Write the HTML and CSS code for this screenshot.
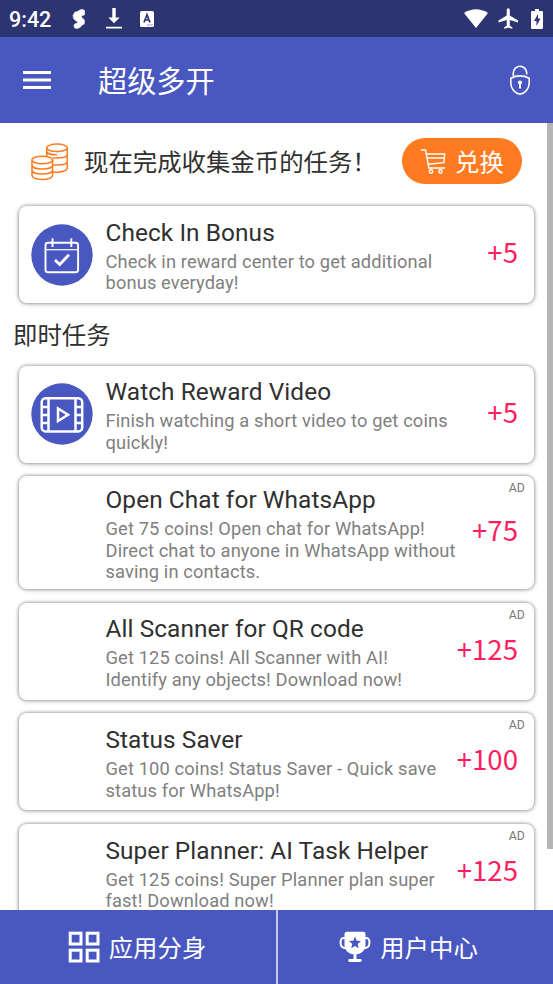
FILE: index.html
```html
<!DOCTYPE html>
<html lang="zh-CN">
<head>
<meta charset="utf-8">
<title>超级多开</title>
<link rel="stylesheet" href="styles.css">
</head>
<body>
<div class="app">
  <div class="status">
    <span class="clock">9:42</span>
    <svg class="s-logo" width="14" height="20" viewBox="0 0 14 20"><path d="M8 1 10.500.2l2 1.300v4.300l-2.300.8-1 1.400 3.300 3-.3 4-2.200 1-1.500 2-3 1.600-2.800-.6-.9-2.500 1.200-1.800 2-.4.800-1L1.800 10 1 6.500l2-3.500 2-.2z" fill="#fff" stroke="#fff" stroke-width=".6" stroke-linejoin="round"/></svg>
    <svg class="download" width="16" height="21" viewBox="0 0 16 21"><path d="M6.300 0h3.400v9.500h4L8 15.200 2.300 9.500h4zM0 18.700h16V20.500H0z" fill="#fff"/></svg>
    <svg class="a-box" width="14" height="16" viewBox="0 0 14 16"><rect width="14" height="16" rx="1.500" fill="#fff"/><path d="M4 11.500 7 3.700l3 7.800M5 9h4" fill="none" stroke="#2c3572" stroke-width="1.700"/><path d="M7.500 14h1M9.500 14h1M11.500 14h1" stroke="#2c3572" stroke-width="1"/></svg>
    <span class="spacer"></span>
    <svg class="wifi" width="24" height="19" viewBox="0 0 24 19"><path d="M0 4Q12-3.500 24 4L12 19z" fill="#fff"/></svg>
    <svg class="plane" width="20" height="21" viewBox="2 2 19.500 20"><path d="M21.500 16v-2l-8-5V3.500a1.500 1.500 0 0 0-3 0V9l-8 5v2l8-2.500V19l-2.500 1.500V22l4-1 4 1v-1.500L13.500 19v-5.500z" fill="#fff"/></svg>
    <svg class="battery" width="12" height="20" viewBox="0 0 12 20"><path d="M4 0h4v2h2.700Q12 2 12 3.300V18.700Q12 20 10.700 20H1.300Q0 20 0 18.700V3.300Q0 2 1.300 2H4z" fill="#fff"/><path d="M7 5 3 12h2.500v5L9.500 9.500H7z" fill="#2c3572"/></svg>
  </div>
  <div class="toolbar">
    <svg class="menu" width="28" height="18" viewBox="0 0 28 18"><path d="M0 1.500h28M0 9h28M0 16.500h28" stroke="#fff" stroke-width="3"/></svg>
    <h1>超级多开</h1>
    <svg class="lock" width="22" height="31" viewBox="0 0 22 31"><path d="M4.300 11V8.200a6.700 6.700 0 0 1 13.400-.4V9.500M1.800 13.200Q11 8.500 20.200 13.200V18c0 6-4.200 10.500-9.200 11.300C6 28.500 1.800 24 1.800 18z" fill="none" stroke="#fff" stroke-width="1.600"/><circle cx="11" cy="17.500" r="2.100" fill="#fff"/><path d="M11 18v5.500" stroke="#fff" stroke-width="2"/></svg>
  </div>
  <div class="scroll">
    <div class="content">
      <div class="promo">
        <svg class="coins" width="38" height="38" viewBox="0 0 38 38" fill="none" stroke="#ff7b22" stroke-width="1.500"><ellipse cx="26" cy="4.800" rx="10.300" ry="3.800"/><path d="M15.700 4.800V13.500M36.300 4.800V25c0 2.500-5 4.200-10.300 4.200-1.500 0-3-.1-4-.3M36.300 11.300c0 2.500-4.600 3.800-10.300 3.800-1.500 0-3-.1-4-.3M36.300 18.300c0 2.500-4.600 3.800-10.300 3.800-1.500 0-3-.1-4-.3M15.700 9c1 1.700 5 2.800 10.300 2.800"/><ellipse cx="11.300" cy="17" rx="10.300" ry="3.800" /><path d="M1 17v15.300c0 2.500 4.600 4.200 10.300 4.200s10.300-1.700 10.300-4.200V17M1 22.300c0 2.300 4.600 3.800 10.300 3.800s10.300-1.500 10.300-3.800M1 27.300c0 2.300 4.600 3.800 10.300 3.800s10.300-1.500 10.300-3.800"/></svg>
        <span class="promo-text">现在完成收集金币的任务！</span>
        <div class="exchange">
          <svg width="25" height="25" viewBox="0 0 25 25" fill="none" stroke="#fff" stroke-width="1.400"><path d="M0 1h4.500l3.400 18H24M5.300 5H23.700l-.8 8.700L7.300 15.300M6.500 9H23.300"/><circle cx="10" cy="22.500" r="1.700"/><circle cx="19.500" cy="22.500" r="1.700"/></svg>
          <span>兑换</span>
        </div>
      </div>
      <div class="card">
        <div class="icon"><svg width="62" height="62" viewBox="0 0 62 62"><circle cx="31" cy="31" r="30.700" fill="#4957c0"/><g fill="none" stroke="#fff"><rect x="14.500" y="18.800" width="32.600" height="29.500" rx="2.500" stroke-width="1.900"/><path d="M15 25.700h32" stroke-width="1.200"/><path d="M21.500 14.300V23M40.300 14.300V23" stroke-width="1.900"/><path d="m24 36 4.700 4.500 9.300-9.800" stroke-width="2.800"/></g></svg></div>
        <div class="text"><h2>Check In Bonus</h2><p>Check in reward center to get additional<br>bonus everyday!</p></div>
        <b class="coin">+5</b>
      </div>
      <h3>即时任务</h3>
      <div class="card">
        <div class="icon"><svg width="62" height="62" viewBox="0 0 62 62"><circle cx="31" cy="31" r="30.700" fill="#4957c0"/><g fill="none" stroke="#fff" stroke-width="2.500"><rect x="10.700" y="15.200" width="40.500" height="33.200" rx="4"/><path d="M17.500 15v33.500M44.500 15v33.500M11 24h7M11 32h7M11 40h7M44.500 24h7M44.500 32h7M44.500 40h7M27 25.500v12.500l10-6.300z"/></g></svg></div>
        <div class="text"><h2>Watch Reward Video</h2><p>Finish watching a short video to get coins<br>quickly!</p></div>
        <b class="coin">+5</b>
      </div>
      <div class="card">
        <div class="icon"></div>
        <div class="text"><h2>Open Chat for WhatsApp</h2><p>Get 75 coins! Open chat for WhatsApp!<br>Direct chat to anyone in WhatsApp without<br>saving in contacts.</p></div>
        <b class="coin">+75</b><span class="ad">AD</span>
      </div>
      <div class="card">
        <div class="icon"></div>
        <div class="text"><h2>All Scanner for QR code</h2><p>Get 125 coins! All Scanner with AI!<br>Identify any objects! Download now!</p></div>
        <b class="coin">+125</b><span class="ad">AD</span>
      </div>
      <div class="card">
        <div class="icon"></div>
        <div class="text"><h2>Status Saver</h2><p>Get 100 coins! Status Saver - Quick save<br>status for WhatsApp!</p></div>
        <b class="coin">+100</b><span class="ad">AD</span>
      </div>
      <div class="card">
        <div class="icon"></div>
        <div class="text"><h2>Super Planner: AI Task Helper</h2><p>Get 125 coins! Super Planner plan super<br>fast! Download now!</p></div>
        <b class="coin">+125</b><span class="ad">AD</span>
      </div>
    </div>
    <div class="scrollbar"></div>
  </div>
  <div class="tabs">
    <div class="tab">
      <svg width="32" height="32" viewBox="0 0 32 32" fill="none" stroke="#fff" stroke-width="3"><rect x="2.200" y="2.200" width="10.800" height="10.800"/><rect x="19.200" y="2.200" width="10.800" height="10.800"/><rect x="2.200" y="19.200" width="10.800" height="10.800"/><rect x="19.200" y="19.200" width="10.800" height="10.800"/></svg>
      <span>应用分身</span>
    </div>
    <div class="tab">
      <svg width="32" height="32" viewBox="0 0 32 32"><path d="M5.500 3Q5.500.7 8 .7H24q2.500 0 2.500 2.300V14c0 5-4 9-9 9.200V28H21q1.800 0 1.800 1.400T21 31H11q-1.800 0-1.800-1.600T11 28h3.500V23.200C9.500 23 5.500 19 5.500 14z" fill="#fff"/><path d="M7 7.300Q1.500 5.500 1.500 11.500T8.500 17.300M25 7.300Q30.500 5.500 30.500 11.500T23.500 17.300" fill="none" stroke="#fff" stroke-width="2"/><path d="m16 5.500 1.700 4.200 4.300.3-3.300 2.900 1.100 4.400-3.800-2.400-3.800 2.400 1.100-4.400L10 10l4.300-.3z" fill="#4957c0"/></svg>
      <span>用户中心</span>
    </div>
  </div>
</div>
</body>
</html>
```

FILE: styles.css
```css
* { box-sizing: border-box; margin: 0; padding: 0; }
body { width: 553px; height: 984px; overflow: hidden; background: #fff; font-family: Roboto, "Noto Sans CJK SC", sans-serif; color: #303030; }
svg { display: block; flex: none; }
.app { display: flex; flex-direction: column; height: 984px; }
.status { display: flex; align-items: center; height: 37px; flex: none; padding: 0 10px 0 9px; background: #2c3572; }
.clock { width: 63px; font-size: 21.5px; font-weight: 500; color: #fff; line-height: 37px; padding-top: 1px; }
.s-logo { margin-right: 20px; }
.download { margin-right: 18px; }
.spacer { flex: 1; }
.wifi { margin-right: 10px; }
.plane { margin-right: 13px; }
.toolbar { display: flex; align-items: center; height: 86px; flex: none; padding: 0 22px 0 23px; background: #4957c0; }
.toolbar h1 { flex: 1; margin-left: 47px; padding-bottom: 2px; font: 400 29.200px/40px "Noto Sans CJK SC", sans-serif; color: #fff; }
.scroll { display: flex; flex: 1; min-height: 0; overflow: hidden; }
.content { flex: 1; padding-left: 19px; padding-right: 13px; }
.scrollbar { width: 6px; height: 726px; background: #b5b5b5; }
.promo { display: flex; align-items: center; height: 76px; margin-bottom: 7px; padding-left: 12px; padding-right: 12px; }
.coins { margin-top: 1px; }
.promo-text { flex: 1; margin-left: 15px; padding-bottom: 1px; white-space: nowrap; font: 400 24.400px/36px "Noto Sans CJK SC", sans-serif; }
.exchange { display: flex; align-items: center; width: 120px; height: 46px; border-radius: 23px; background: #ff7b22; padding-left: 19px; gap: 9px; color: #fff; font: 400 24.400px/36px "Noto Sans CJK SC", sans-serif; }
.exchange span { padding-bottom: 1px; }
.card { position: relative; display: flex; align-items: center; min-height: 97px; margin-bottom: 13.700px; padding: 6.200px 16px 6.200px 12px; border-radius: 8px; background: #fff; box-shadow: 0 0 3px 1px rgba(0,0,0,.28), 0 1px 5px 1px rgba(0,0,0,.12); }
.icon { width: 62px; margin-right: 12.500px; flex: none; }
.text { flex: 1; padding-top: 3.600px; white-space: nowrap; }
.text h2 { margin-bottom: 5px; font-size: 24.400px; line-height: 27px; font-weight: 400; letter-spacing: .08px; }
.text p { font-size: 18.300px; line-height: 21.500px; letter-spacing: .13px; color: #808080; }
.coin { font: 400 27.600px/36px "Noto Sans CJK SC", sans-serif; color: #ff1f60; margin-top: -7px; }
.ad { position: absolute; top: 5px; right: 9px; font-size: 12.200px; line-height: 14px; color: #777; letter-spacing: .2px; }
h3 { margin: -1px 0 13px -6px; height: 37px; font: 400 24.400px/36px "Noto Sans CJK SC", sans-serif; }
.tabs { display: grid; grid-template-columns: 276px 1fr; height: 74px; flex: none; background: #4957c0; }
.tab { display: flex; align-items: center; justify-content: center; gap: 9px; padding-right: 2px; color: #fff; font: 400 24.400px/36px "Noto Sans CJK SC", sans-serif; }
.tab span { padding-bottom: 1px; }
.tab + .tab { border-left: 2px solid #c3c8ec; padding-right: 14px; }
```
